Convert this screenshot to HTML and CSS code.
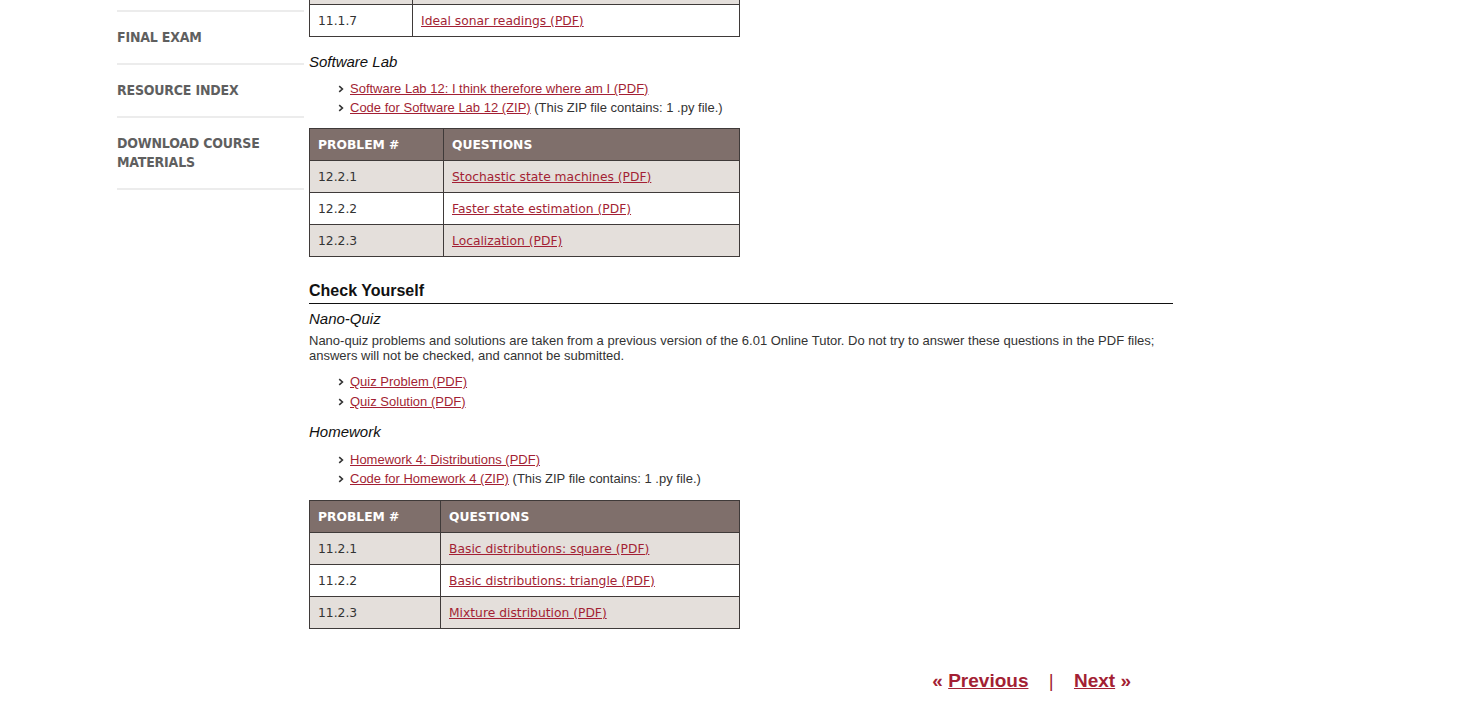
FILE: index.html
```html
<!DOCTYPE html>
<html>
<head>
<meta charset="utf-8">
<link rel="stylesheet" href="styles.css">
</head>
<body>
<div class="page">
  <nav class="sidebar">
    <a class="nav-item" href="#">FINAL EXAM</a>
    <a class="nav-item" href="#">RESOURCE INDEX</a>
    <a class="nav-item" href="#">DOWNLOAD COURSE MATERIALS</a>
  </nav>
  <main class="main">
    <table class="ptable t1">
      <tr class="odd"><td class="num"></td><td></td></tr>
      <tr><td class="num">11.1.7</td><td><a href="#">Ideal sonar readings (PDF)</a></td></tr>
    </table>

    <h4 class="sub first">Software Lab</h4>
    <ul class="links">
      <li><svg class="chev" viewBox="0 0 6 8"><path d="M1.2 1.2 L4.4 4 L1.2 6.8" fill="none" stroke="#333" stroke-width="1.6"/></svg><a href="#">Software Lab 12: I think therefore where am I (PDF)</a></li>
      <li><svg class="chev" viewBox="0 0 6 8"><path d="M1.2 1.2 L4.4 4 L1.2 6.8" fill="none" stroke="#333" stroke-width="1.6"/></svg><a href="#">Code for Software Lab 12 (ZIP)</a> (This ZIP file contains: 1 .py file.)</li>
    </ul>

    <table class="ptable t2">
      <tr class="head"><th>PROBLEM #</th><th>QUESTIONS</th></tr>
      <tr class="odd"><td class="num">12.2.1</td><td><a href="#">Stochastic state machines (PDF)</a></td></tr>
      <tr><td class="num">12.2.2</td><td><a href="#">Faster state estimation (PDF)</a></td></tr>
      <tr class="odd"><td class="num">12.2.3</td><td><a href="#">Localization (PDF)</a></td></tr>
    </table>

    <h3 class="section">Check Yourself</h3>
    <h4 class="sub nq">Nano-Quiz</h4>
    <p class="para">Nano-quiz problems and solutions are taken from a previous version of the 6.01 Online Tutor. Do not try to answer these questions in the PDF files; answers will not be checked, and cannot be submitted.</p>
    <ul class="links spaced">
      <li><svg class="chev" viewBox="0 0 6 8"><path d="M1.2 1.2 L4.4 4 L1.2 6.8" fill="none" stroke="#333" stroke-width="1.6"/></svg><a href="#">Quiz Problem (PDF)</a></li>
      <li><svg class="chev" viewBox="0 0 6 8"><path d="M1.2 1.2 L4.4 4 L1.2 6.8" fill="none" stroke="#333" stroke-width="1.6"/></svg><a href="#">Quiz Solution (PDF)</a></li>
    </ul>

    <h4 class="sub hw">Homework</h4>
    <ul class="links hwlinks">
      <li><svg class="chev" viewBox="0 0 6 8"><path d="M1.2 1.2 L4.4 4 L1.2 6.8" fill="none" stroke="#333" stroke-width="1.6"/></svg><a href="#">Homework 4: Distributions (PDF)</a></li>
      <li><svg class="chev" viewBox="0 0 6 8"><path d="M1.2 1.2 L4.4 4 L1.2 6.8" fill="none" stroke="#333" stroke-width="1.6"/></svg><a href="#">Code for Homework 4 (ZIP)</a> (This ZIP file contains: 1 .py file.)</li>
    </ul>

    <table class="ptable t3">
      <tr class="head"><th>PROBLEM #</th><th>QUESTIONS</th></tr>
      <tr class="odd"><td class="num">11.2.1</td><td><a href="#">Basic distributions: square (PDF)</a></td></tr>
      <tr><td class="num">11.2.2</td><td><a href="#">Basic distributions: triangle (PDF)</a></td></tr>
      <tr class="odd"><td class="num">11.2.3</td><td><a href="#">Mixture distribution (PDF)</a></td></tr>
    </table>

    <div class="pager">
      <span class="q">«</span> <a href="#">Previous</a>
      <span class="sep">|</span>
      <a href="#">Next</a> <span class="q">»</span>
    </div>
  </main>
</div>
</body>
</html>
```

FILE: styles.css
```css
html, body {
  margin: 0;
  padding: 0;
  background: #ffffff;
}
body {
  font-family: "Liberation Sans", Arial, sans-serif;
  color: #222;
  overflow: hidden;
}
.page {
  display: flex;
  align-items: flex-start;
  padding-left: 117px;
}
.sidebar {
  width: 187px;
  margin-top: 10px;
  display: flex;
  flex-direction: column;
  border-top: 2px solid #ececec;
}
.nav-item {
  display: block;
  font-family: "DejaVu Sans Condensed", "DejaVu Sans", sans-serif;
  font-weight: bold;
  font-size: 14px;
  line-height: 19px;
  color: #5f5f5f;
  text-decoration: none;
  padding: 16px 0 16px 0;
  border-bottom: 2px solid #ececec;
  letter-spacing: -0.2px;
}
.main {
  width: 864px;
  margin-left: 5px;
  margin-top: -28px;
}
a {
  color: #a31f34;
  text-decoration: underline;
}
.ptable {
  border-collapse: collapse;
  width: 431px;
  font-family: "DejaVu Sans", Verdana, sans-serif;
  font-size: 12.3px;
  color: #333;
}
.ptable td, .ptable th {
  border: 1px solid #3f3a39;
  height: 31px;
  padding: 0 8px;
  text-align: left;
  vertical-align: middle;
}
.ptable th {
  background: #7f6f6b;
  color: #fff;
  font-weight: bold;
  font-size: 12.3px;
}
.ptable tr.odd td {
  background: #e4dfdb;
}
.t1 td:first-child { width: 86px; }
.t2 th:first-child, .t2 td:first-child { width: 117px; }
.t3 th:first-child, .t3 td:first-child { width: 114px; }
.sub {
  font-style: italic;
  font-weight: normal;
  font-size: 15px;
  line-height: 18px;
  color: #111;
  margin: 0;
}
.sub.first { margin-top: 16px; }
.links {
  list-style: none;
  margin: 8px 0 0 0;
  padding: 0 0 0 29px;
  font-size: 13px;
  line-height: 19px;
  color: #333;
}
.links li {
  display: block;
}
.links.spaced li { margin-bottom: 1px; }
.chev {
  display: inline-block;
  width: 6px;
  height: 8px;
  margin-right: 6px;
  vertical-align: 0;
}
.t2 { margin-top: 11px; }
.section {
  font-size: 16px;
  font-weight: bold;
  color: #111;
  margin: 24px 0 0 0;
  line-height: 20px;
  padding-bottom: 2px;
  border-bottom: 1px solid #111;
}
.sub.nq { margin-top: 6px; }
.para {
  font-size: 13px;
  line-height: 15px;
  color: #333;
  margin: 5px 0 0 0;
}
.links.spaced { margin-top: 9px; }
.sub.hw { margin-top: 12px; }
.links.hwlinks { margin-top: 9px; }
.t3 { margin-top: 12px; }
.pager {
  margin-top: 41px;
  text-align: right;
  padding-right: 42px;
  font-size: 19px;
  font-weight: bold;
  color: #a31f34;
}
.pager .sep {
  margin: 0 15px;
  font-weight: normal;
}
```
